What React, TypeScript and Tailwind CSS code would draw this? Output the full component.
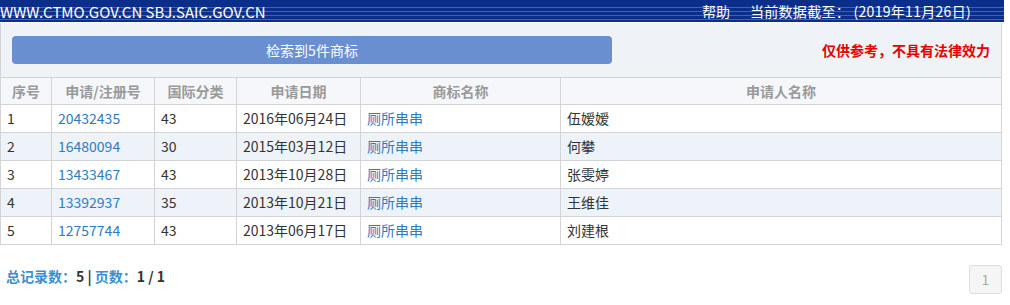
const rows = [
  { no: 1, reg: "20432435", cls: "43", date: "2016年06月24日", name: "厕所串串", owner: "伍嫒嫒" },
  { no: 2, reg: "16480094", cls: "30", date: "2015年03月12日", name: "厕所串串", owner: "何攀" },
  { no: 3, reg: "13433467", cls: "43", date: "2013年10月28日", name: "厕所串串", owner: "张雯婷" },
  { no: 4, reg: "13392937", cls: "35", date: "2013年10月21日", name: "厕所串串", owner: "王维佳" },
  { no: 5, reg: "12757744", cls: "43", date: "2013年06月17日", name: "厕所串串", owner: "刘建根" },
]

const th = "h-[27px] border border-[#d4d4d4] font-bold text-[#9a9a9a] text-center"
const td = "h-[28px] border border-[#d4d4d4] pl-[6px] text-left"

export default function App() {
  return (
    <div className="w-[1010px] h-[305px] bg-white text-[14px] text-[#333] font-['Microsoft_YaHei','Noto_Sans_CJK_SC',sans-serif] overflow-hidden">
      {/* top bar */}
      <div className="w-[1004px] h-[22px] flex items-center justify-between text-white bg-[linear-gradient(to_bottom,#0c2e8b_6px,transparent_6px),repeating-linear-gradient(to_bottom,#0c2e8b_0px,#0c2e8b_3px,#3d63b8_3px,#3d63b8_4px)]">
        <span className="text-[15px] leading-none">WWW.CTMO.GOV.CN SBJ.SAIC.GOV.CN</span>
        <div className="flex gap-[20px] pr-[33px] leading-none">
          <span>帮助</span>
          <span className="tracking-[0.3px]">当前数据截至： (2019年11月26日)</span>
        </div>
      </div>

      {/* result panel */}
      <div className="w-[1002px] h-[54px] mt-px border-x border-[#d4d4d4] bg-[#eff3f8] flex items-center justify-between pl-[11px] pr-[11px]">
        <div className="w-[600px] h-[28px] rounded-[4px] bg-[#6a8fd1] text-white flex items-center justify-center">
          检索到5件商标
        </div>
        <span className="font-bold text-[#e60000]">仅供参考，不具有法律效力</span>
      </div>

      <table className="w-[1002px] border-collapse table-fixed">
        <colgroup>
          <col className="w-[51px]" />
          <col className="w-[103px]" />
          <col className="w-[82px]" />
          <col className="w-[124px]" />
          <col className="w-[200px]" />
          <col />
        </colgroup>
        <thead>
          <tr className="bg-[#f5f7fa]">
            <th className={th}>序号</th>
            <th className={th}>申请/注册号</th>
            <th className={th}>国际分类</th>
            <th className={th}>申请日期</th>
            <th className={th}>商标名称</th>
            <th className={th}>申请人名称</th>
          </tr>
        </thead>
        <tbody>
          {rows.map((r) => (
            <tr key={r.no} className={r.no % 2 === 0 ? "bg-[#eef3f9]" : "bg-white"}>
              <td className={td}>{r.no}</td>
              <td className={td}>
                <span className="text-[#2f7bbf]">{r.reg}</span>
              </td>
              <td className={td}>{r.cls}</td>
              <td className={td}>{r.date}</td>
              <td className={td}>
                <span className="text-[#2f7bbf]">{r.name}</span>
              </td>
              <td className={td}>{r.owner}</td>
            </tr>
          ))}
        </tbody>
      </table>

      {/* footer */}
      <div className="w-[1002px] mt-[20px] flex items-start justify-between pl-[6px]">
        <div className="mt-[1px] font-bold text-[#333]">
          <span className="text-[#3d8fd1]">总记录数：</span>5 | <span className="text-[#3d8fd1]">页数：</span>1 / 1
        </div>
        <div className="w-[33px] h-[29px] rounded-[3px] border border-[#ddd] bg-[#f5f5f5] text-[#aaa] flex items-center justify-center">
          1
        </div>
      </div>
    </div>
  )
}
